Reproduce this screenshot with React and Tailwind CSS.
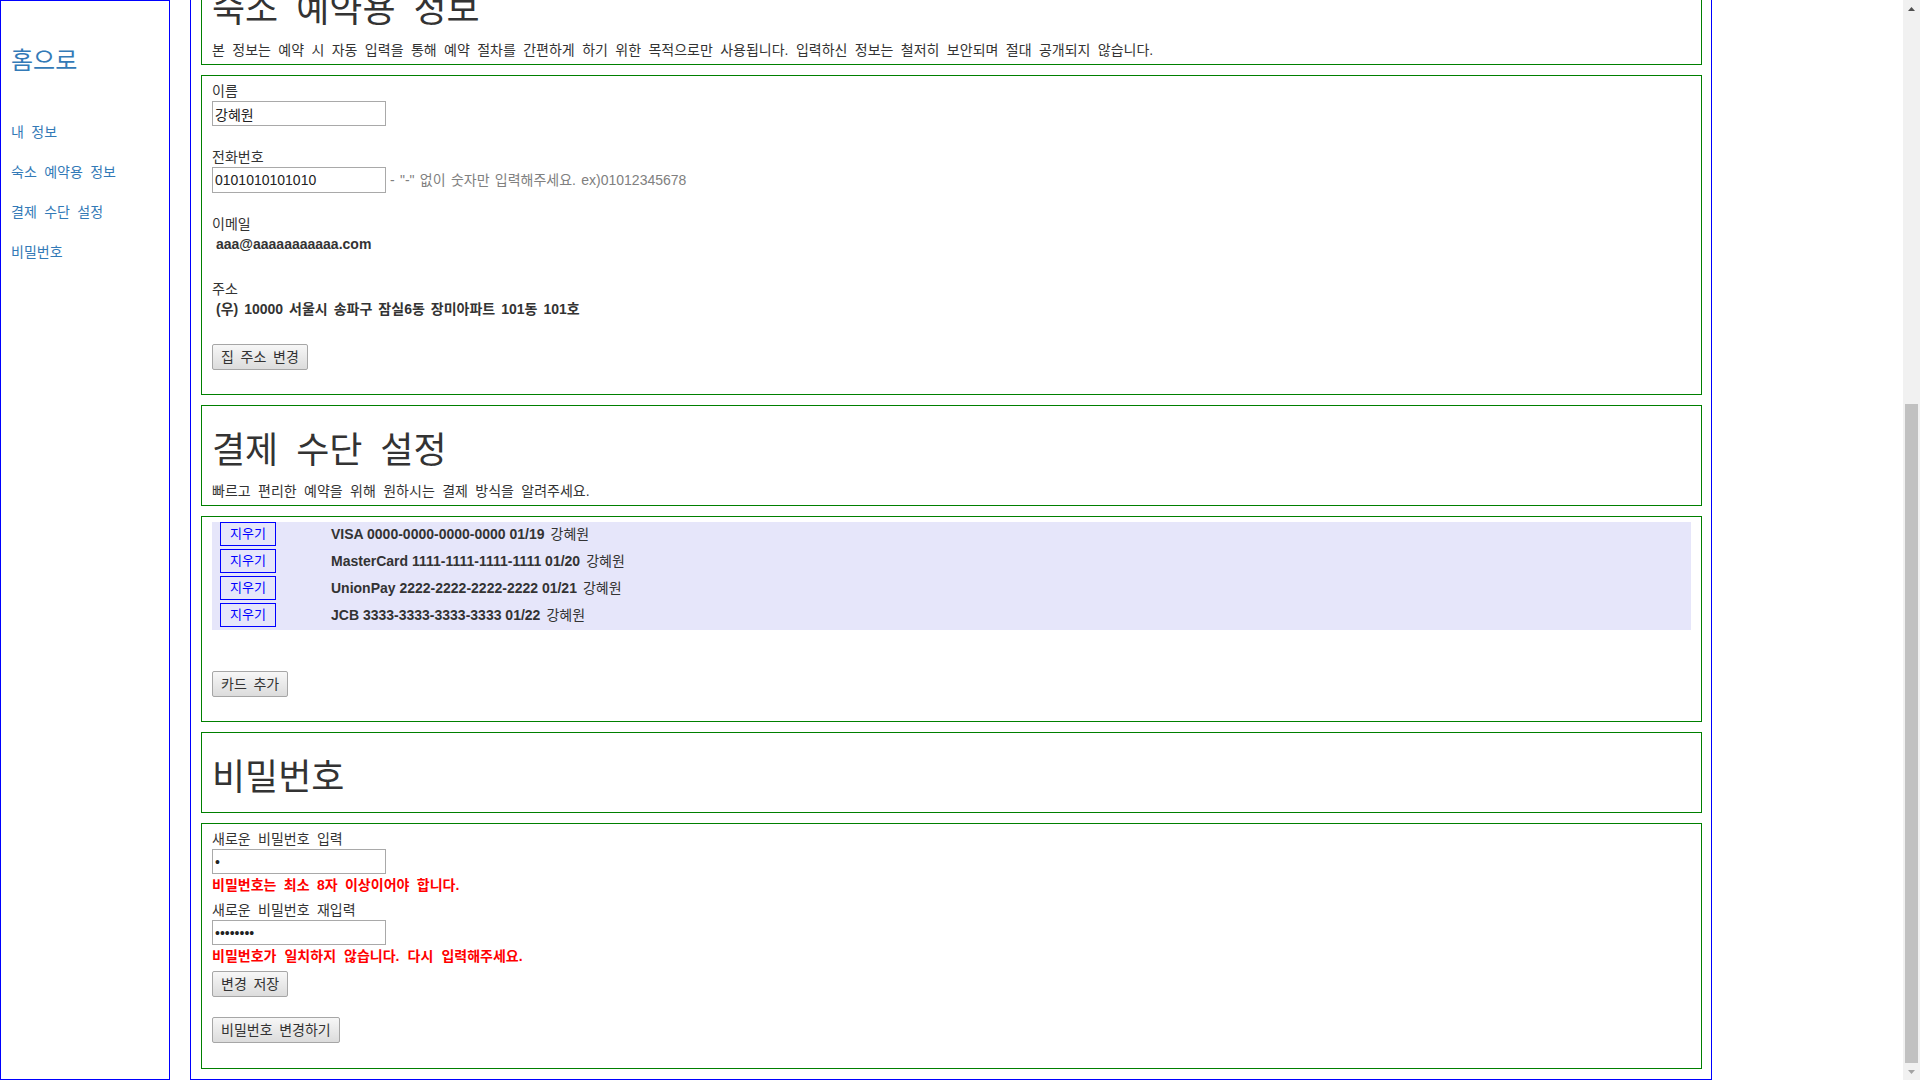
import React from 'react';

const cards = [
  { id: 1, info: 'VISA 0000-0000-0000-0000 01/19', name: '강혜원' },
  { id: 2, info: 'MasterCard 1111-1111-1111-1111 01/20', name: '강혜원' },
  { id: 3, info: 'UnionPay 2222-2222-2222-2222 01/21', name: '강혜원' },
  { id: 4, info: 'JCB 3333-3333-3333-3333 01/22', name: '강혜원' },
];

const menu = ['내 정보', '숙소 예약용 정보', '결제 수단 설정', '비밀번호'];

function Btn({ children, className = '' }) {
  return (
    <button
      type="button"
      className={`block h-[26px] px-[8px] border border-[#a6a6a6] rounded-[2px] bg-linear-to-b from-[#f7f7f7] to-[#dcdcdc] text-[14px] leading-[20px] text-[#333] [word-spacing:0.2em] ${className}`}
    >
      {children}
    </button>
  );
}

function Field({ value, h = 'h-[25px]' }) {
  return (
    <input
      readOnly
      value={value}
      className={`block w-[174px] ${h} border border-[#a9a9a9] px-[2px] text-[14px] text-[#222] bg-white outline-none`}
    />
  );
}

// one text line, fixed 20px so mixed latin/korean fonts do not grow the line box
function Line({ children, className = '' }) {
  return <div className={`h-[20px] leading-[20px] whitespace-nowrap ${className}`}>{children}</div>;
}

function Box({ children, className = '' }) {
  return <section className={`border border-[#008000] px-[10px] ${className}`}>{children}</section>;
}

function Header({ title, desc }) {
  return (
    <Box className="pt-[5px] pb-[4px]">
      <h1 className="mt-[20px] mb-[10px] h-[40px] text-[36px] leading-[40px] font-normal text-[#333] [word-spacing:0.22em]">
        {title}
      </h1>
      {desc && <Line>{desc}</Line>}
    </Box>
  );
}

export default function App() {
  return (
    <div className="flex h-[1080px] w-[1920px] overflow-hidden bg-white text-[14px] leading-[20px] text-[#333] [word-spacing:0.25em] font-['Liberation_Sans','Noto_Sans_CJK_KR',sans-serif]">
      {/* sidebar */}
      <aside className="w-[170px] h-full shrink-0 border border-[#0000ff] pl-[10px] pt-[47px]">
        <h3 className="h-[26px] text-[24px] leading-[26px] text-[#337ab7]">홈으로</h3>
        <nav className="mt-[48px] flex flex-col gap-[20px]">
          {menu.map((m) => (
            <a key={m} href="#" className="block h-[20px] text-[#337ab7] leading-[20px]">
              {m}
            </a>
          ))}
        </nav>
      </aside>

      {/* main, scrolled to bottom */}
      <div className="ml-[20px] w-[1522px] h-full shrink-0 flex flex-col justify-end overflow-hidden">
        <main className="shrink-0 border border-[#0000ff] pl-[10px] pr-[9px] pt-[10px] pb-[10px] flex flex-col gap-[10px]">
          <Header
            title="숙소 예약용 정보"
            desc="본 정보는 예약 시 자동 입력을 통해 예약 절차를 간편하게 하기 위한 목적으로만 사용됩니다. 입력하신 정보는 철저히 보안되며 절대 공개되지 않습니다."
          />

          <Box className="pt-[5px] pb-[24px]">
            <Line>이름</Line>
            <Field value="강혜원" />
            <Line className="mt-[21px]">전화번호</Line>
            <div className="flex items-center">
              <Field value="0101010101010" h="h-[26px]" />
              <span className="ml-[4px] text-[#808080] [word-spacing:0.1em]">- "-" 없이 숫자만 입력해주세요. ex)01012345678</span>
            </div>
            <Line className="mt-[21px]">이메일</Line>
            <Line className="pl-[4px] font-bold">aaa@aaaaaaaaaaa.com</Line>
            <Line className="mt-[25px]">주소</Line>
            <Line className="pl-[4px] font-bold [word-spacing:0.15em]">(우) 10000 서울시 송파구 잠실6동 장미아파트 101동 101호</Line>
            <Btn className="mt-[25px]">집 주소 변경</Btn>
          </Box>

          <Header title="결제 수단 설정" desc="빠르고 편리한 예약을 위해 원하시는 결제 방식을 알려주세요." />

          <Box className="pt-[5px] pb-[24px]">
            <div className="bg-[#e6e6fa]">
              {cards.map((c) => (
                <div key={c.id} className="flex h-[27px]">
                  <div className="w-[119px] shrink-0 pl-[8px]">
                    <button
                      type="button"
                      className="h-[24px] w-[56px] border border-[#0000ff] text-[13px] leading-[20px] text-[#0000ff]"
                    >
                      지우기
                    </button>
                  </div>
                  <div className="h-[24px] leading-[24px] whitespace-nowrap">
                    <span className="font-bold [word-spacing:0px]">{c.info}</span>
                    <span className="ml-[6px]">{c.name}</span>
                  </div>
                </div>
              ))}
            </div>
            <Btn className="mt-[41px]">카드 추가</Btn>
          </Box>

          <Header title="비밀번호" />

          <Box className="pt-[5px] pb-[25px]">
            <Line>새로운 비밀번호 입력</Line>
            <Field value="•" />
            <Line className="mt-[1px] font-bold text-[#ff0000]">비밀번호는 최소 8자 이상이어야 합니다.</Line>
            <Line className="mt-[5px]">새로운 비밀번호 재입력</Line>
            <Field value="••••••••" />
            <Line className="mt-[1px] font-bold text-[#ff0000] [word-spacing:0.3em]">비밀번호가 일치하지 않습니다. 다시 입력해주세요.</Line>
            <Btn className="mt-[5px]">변경 저장</Btn>
            <Btn className="mt-[20px]">비밀번호 변경하기</Btn>
          </Box>
        </main>
      </div>

      <div className="flex-1" />

      {/* scrollbar */}
      <div className="w-[17px] h-full shrink-0 bg-[#f1f1f1] flex flex-col">
        <div className="h-[17px] flex items-center justify-center">
          <svg width="7" height="4" viewBox="0 0 7 4">
            <path d="M0 4 L3.5 0 L7 4 Z" fill="#505050" />
          </svg>
        </div>
        <div className="flex-1 flex flex-col justify-end px-[2px]">
          <div className="h-[659px] bg-[#c1c1c1]" />
        </div>
        <div className="h-[17px] flex items-center justify-center">
          <svg width="7" height="4" viewBox="0 0 7 4">
            <path d="M0 0 L7 0 L3.5 4 Z" fill="#a3a3a3" />
          </svg>
        </div>
      </div>
    </div>
  );
}
